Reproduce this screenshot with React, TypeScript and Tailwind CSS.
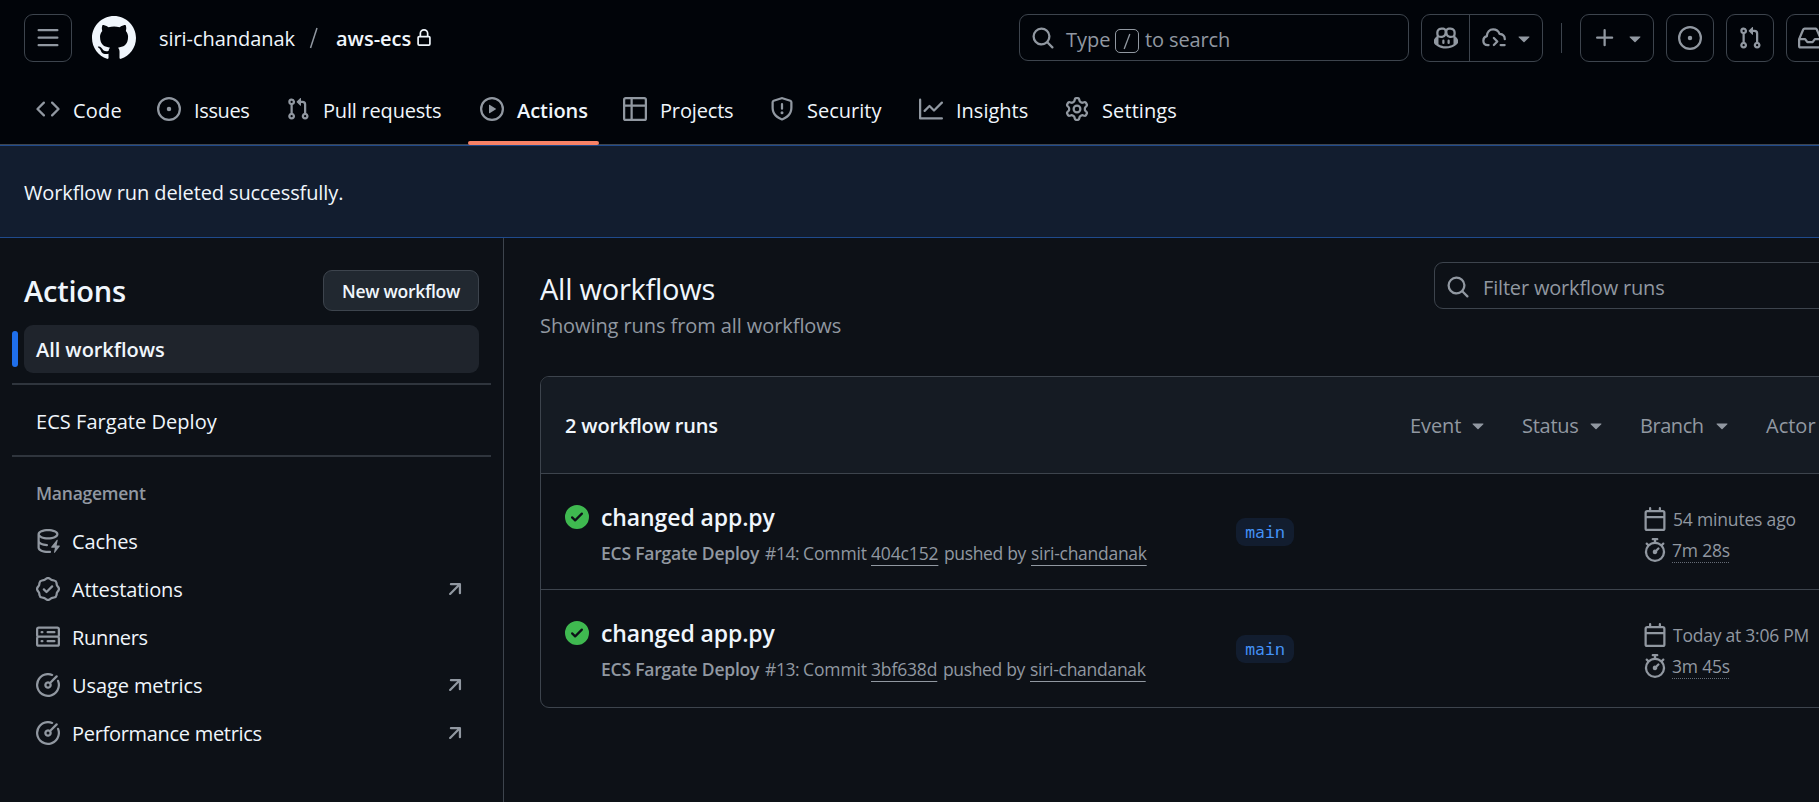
import type { ReactNode } from "react";

const P = {
  bars: "M1 2.75A.75.75 0 0 1 1.75 2h12.5a.75.75 0 0 1 0 1.5H1.75A.75.75 0 0 1 1 2.75Zm0 5A.75.75 0 0 1 1.75 7h12.5a.75.75 0 0 1 0 1.5H1.75A.75.75 0 0 1 1 7.75ZM1.75 12h12.5a.75.75 0 0 1 0 1.5H1.75a.75.75 0 0 1 0-1.5Z",
  code: "m11.28 3.22 4.25 4.25a.75.75 0 0 1 0 1.06l-4.25 4.25a.749.749 0 0 1-1.275-.326.749.749 0 0 1 .215-.734L13.94 8l-3.72-3.72a.749.749 0 0 1 .326-1.275.749.749 0 0 1 .734.215Zm-6.56 0a.751.751 0 0 1 1.042.018.751.751 0 0 1 .018 1.042L2.06 8l3.72 3.72a.749.749 0 0 1-.326 1.275.749.749 0 0 1-.734-.215L.47 8.53a.75.75 0 0 1 0-1.06Z",
  issue: "M8 9.5a1.5 1.5 0 1 0 0-3 1.5 1.5 0 0 0 0 3Z M8 0a8 8 0 1 1 0 16A8 8 0 0 1 8 0ZM1.5 8a6.5 6.5 0 1 0 13 0 6.5 6.5 0 0 0-13 0Z",
  pull: "M1.5 3.25a2.25 2.25 0 1 1 3 2.122v5.256a2.251 2.251 0 1 1-1.5 0V5.372A2.25 2.25 0 0 1 1.5 3.25Zm5.677-.177L9.573.677A.25.25 0 0 1 10 .854V2.5h1A2.5 2.5 0 0 1 13.5 5v5.628a2.251 2.251 0 1 1-1.5 0V5a1 1 0 0 0-1-1h-1v1.646a.25.25 0 0 1-.427.177L7.177 3.427a.25.25 0 0 1 0-.354ZM3.75 2.5a.75.75 0 1 0 0 1.5.75.75 0 0 0 0-1.5Zm0 9.5a.75.75 0 1 0 0 1.5.75.75 0 0 0 0-1.5Zm8.25.75a.75.75 0 1 0 1.5 0 .75.75 0 0 0-1.5 0Z",
  play: "M8 0a8 8 0 1 1 0 16A8 8 0 0 1 8 0ZM1.5 8a6.5 6.5 0 1 0 13 0 6.5 6.5 0 0 0-13 0Zm4.879-2.773 4.264 2.559a.25.25 0 0 1 0 .428l-4.264 2.559A.25.25 0 0 1 6 10.559V5.442a.25.25 0 0 1 .379-.215Z",
  table: "M0 1.75C0 .784.784 0 1.75 0h12.5C15.216 0 16 .784 16 1.75v12.5A1.75 1.75 0 0 1 14.25 16H1.75A1.75 1.75 0 0 1 0 14.25ZM6.5 6.5v8h7.75a.25.25 0 0 0 .25-.25V6.5Zm8-1.5V1.75a.25.25 0 0 0-.25-.25H6.5V5Zm-13 1.5v7.75c0 .138.112.25.25.25H5v-8ZM5 5V1.5H1.75a.25.25 0 0 0-.25.25V5Z",
  shield: "M7.467.133a1.748 1.748 0 0 1 1.066 0l5.25 1.68A1.75 1.75 0 0 1 15 3.48V7c0 1.566-.32 3.182-1.303 4.682-.983 1.498-2.585 2.813-5.032 3.855a1.697 1.697 0 0 1-1.33 0c-2.447-1.042-4.049-2.357-5.032-3.855C1.32 10.182 1 8.566 1 7V3.48a1.75 1.75 0 0 1 1.217-1.667Zm.61 1.429a.25.25 0 0 0-.153 0l-5.25 1.68a.25.25 0 0 0-.174.238V7c0 1.358.275 2.666 1.057 3.86.784 1.194 2.121 2.34 4.366 3.297a.196.196 0 0 0 .154 0c2.245-.956 3.582-2.104 4.366-3.298C13.225 9.666 13.5 8.36 13.5 7V3.48a.251.251 0 0 0-.174-.237l-5.25-1.68ZM8.75 4.75v3a.75.75 0 0 1-1.5 0v-3a.75.75 0 0 1 1.5 0ZM9 10.5a1 1 0 1 1-2 0 1 1 0 0 1 2 0Z",
  graph: "M1.5 1.75V13.5h13.75a.75.75 0 0 1 0 1.5H.75a.75.75 0 0 1-.75-.75V1.75a.75.75 0 0 1 1.5 0Zm14.28 2.53-5.25 5.25a.75.75 0 0 1-1.06 0L7 7.06 4.28 9.78a.751.751 0 0 1-1.042-.018.751.751 0 0 1-.018-1.042l3.25-3.25a.75.75 0 0 1 1.06 0L10 7.94l4.72-4.72a.751.751 0 0 1 1.042.018.751.751 0 0 1 .018 1.042Z",
  gear: "M8 0a8.2 8.2 0 0 1 .701.031C9.444.095 9.99.645 10.16 1.29l.288 1.107c.018.066.079.158.212.224.231.114.454.243.668.386.123.082.233.09.299.071l1.103-.303c.644-.176 1.392.021 1.82.63.27.385.506.792.704 1.218.315.675.111 1.422-.364 1.891l-.814.806c-.049.048-.098.147-.088.294.016.257.016.515 0 .772-.01.147.038.246.088.294l.814.806c.475.469.679 1.216.364 1.891a7.977 7.977 0 0 1-.704 1.217c-.428.61-1.176.807-1.82.63l-1.102-.302c-.067-.019-.177-.011-.3.071a5.909 5.909 0 0 1-.668.386c-.133.066-.194.158-.211.224l-.29 1.106c-.168.646-.715 1.196-1.458 1.26a8.006 8.006 0 0 1-1.402 0c-.743-.064-1.289-.614-1.458-1.26l-.289-1.106c-.018-.066-.079-.158-.212-.224a5.738 5.738 0 0 1-.668-.386c-.123-.082-.233-.09-.299-.071l-1.103.303c-.644.176-1.392-.021-1.82-.63a8.12 8.12 0 0 1-.704-1.218c-.315-.675-.111-1.422.363-1.891l.815-.806c.05-.048.098-.147.088-.294a6.214 6.214 0 0 1 0-.772c.01-.147-.038-.246-.088-.294l-.815-.806C.635 6.045.431 5.298.746 4.623a7.92 7.92 0 0 1 .704-1.217c.428-.61 1.176-.807 1.82-.63l1.102.302c.067.019.177.011.3-.071.214-.143.437-.272.668-.386.133-.066.194-.158.211-.224l.29-1.106C6.009.645 6.556.095 7.299.03 7.53.01 7.764 0 8 0Zm-.571 1.525c-.036.003-.108.036-.137.146l-.289 1.105c-.147.561-.549.967-.998 1.189-.173.086-.34.183-.5.29-.417.278-.97.423-1.529.27l-1.103-.303c-.109-.03-.175.016-.195.045-.22.312-.412.644-.573.99-.014.031-.021.11.059.19l.815.806c.411.406.562.957.53 1.456a4.709 4.709 0 0 0 0 .582c.032.499-.119 1.05-.53 1.456l-.815.806c-.081.08-.073.159-.059.19.162.346.353.677.573.989.02.03.085.076.195.046l1.102-.303c.56-.153 1.113-.008 1.53.27.161.107.328.204.501.29.447.222.85.629.997 1.189l.289 1.105c.029.109.101.143.137.146a6.6 6.6 0 0 0 1.142 0c.036-.003.108-.036.137-.146l.289-1.105c.147-.561.549-.967.998-1.189.173-.086.34-.183.5-.29.417-.278.97-.423 1.529-.27l1.103.303c.109.029.175-.016.195-.045.22-.313.411-.644.573-.99.014-.031.021-.11-.059-.19l-.815-.806c-.411-.406-.562-.957-.53-1.456a4.709 4.709 0 0 0 0-.582c-.032-.499.119-1.05.53-1.456l.815-.806c.081-.08.073-.159.059-.19a6.464 6.464 0 0 0-.573-.989c-.02-.03-.085-.076-.195-.046l-1.102.303c-.56.153-1.113.008-1.53-.27a4.44 4.44 0 0 0-.501-.29c-.447-.222-.85-.629-.997-1.189l-.289-1.105c-.029-.11-.101-.143-.137-.146a6.6 6.6 0 0 0-1.142 0ZM11 8a3 3 0 1 1-6 0 3 3 0 0 1 6 0ZM9.5 8a1.5 1.5 0 1 0-3.001.001A1.5 1.5 0 0 0 9.5 8Z",
  search: "M10.68 11.74a6 6 0 0 1-7.922-8.982 6 6 0 0 1 8.982 7.922l3.04 3.04a.749.749 0 0 1-.326 1.275.749.749 0 0 1-.734-.215ZM11.5 7a4.499 4.499 0 1 0-8.997 0A4.499 4.499 0 0 0 11.5 7Z",
  copilot: "M7.998 15.035c-4.562 0-7.873-2.914-7.998-3.749V9.338c.085-.628.677-1.686 1.588-2.065.013-.07.024-.143.036-.218.029-.183.06-.384.126-.612-.201-.508-.254-1.084-.254-1.656 0-.87.128-1.769.693-2.484.579-.733 1.494-1.124 2.724-1.261 1.206-.134 2.262.034 2.944.765.05.053.096.108.139.165.044-.057.094-.112.143-.165.682-.731 1.738-.899 2.944-.765 1.23.137 2.145.528 2.724 1.261.566.715.693 1.614.693 2.484 0 .572-.053 1.148-.254 1.656.066.228.098.429.126.612.012.076.024.148.037.218.924.385 1.522 1.471 1.591 2.095v1.872c0 .766-3.351 3.795-8.002 3.795Zm0-1.485c2.28 0 4.584-1.11 5.002-1.433V7.862l-.023-.116c-.49.21-1.075.291-1.727.291-1.146 0-2.059-.327-2.71-.991A3.222 3.222 0 0 1 8 6.303a3.24 3.24 0 0 1-.544.743c-.65.664-1.563.991-2.71.991-.652 0-1.236-.081-1.727-.291l-.023.116v4.255c.419.323 2.722 1.433 5.002 1.433ZM6.762 2.83c-.193-.206-.637-.413-1.682-.297-1.019.113-1.479.404-1.713.7-.247.312-.369.789-.369 1.554 0 .793.129 1.171.308 1.371.162.181.519.379 1.442.379.853 0 1.339-.235 1.638-.54.315-.322.527-.827.617-1.553.117-.935-.037-1.395-.241-1.614Zm4.155-.297c-1.044-.116-1.488.091-1.681.297-.204.219-.359.679-.242 1.614.091.726.303 1.231.618 1.553.299.305.784.54 1.638.54.922 0 1.28-.198 1.442-.379.179-.2.308-.578.308-1.371 0-.765-.123-1.242-.37-1.554-.233-.296-.693-.587-1.713-.7Z M6.25 9.037a.75.75 0 0 1 .75.75v1.501a.75.75 0 0 1-1.5 0V9.787a.75.75 0 0 1 .75-.75Zm4.25.75v1.501a.75.75 0 0 1-1.5 0V9.787a.75.75 0 0 1 1.5 0Z",
  caret: "m4.427 7.427 3.396 3.396a.25.25 0 0 0 .354 0l3.396-3.396A.25.25 0 0 0 11.396 7H4.604a.25.25 0 0 0-.177.427Z",
  plus: "M7.75 2a.75.75 0 0 1 .75.75V7h4.25a.75.75 0 0 1 0 1.5H8.5v4.25a.75.75 0 0 1-1.5 0V8.5H2.75a.75.75 0 0 1 0-1.5H7V2.75A.75.75 0 0 1 7.75 2Z",
  inbox: "M2.8 2.06A1.75 1.75 0 0 1 4.41 1h7.18c.7 0 1.333.417 1.61 1.06l2.74 6.395c.04.093.06.194.06.295v4.5A1.75 1.75 0 0 1 14.25 15H1.75A1.75 1.75 0 0 1 0 13.25v-4.5c0-.101.02-.202.06-.295Zm1.61.44a.25.25 0 0 0-.23.152L1.887 8H4.75a.75.75 0 0 1 .6.3L6.625 10h2.75l1.275-1.7a.75.75 0 0 1 .6-.3h2.863L11.82 2.652a.25.25 0 0 0-.23-.152Zm10.09 7h-2.875l-1.275 1.7a.75.75 0 0 1-.6.3h-3.5a.75.75 0 0 1-.6-.3L4.375 9.5H1.5v3.75c0 .138.112.25.25.25h12.5a.25.25 0 0 0 .25-.25Z",
  lock: "M4 4a4 4 0 0 1 8 0v2h.25c.966 0 1.75.784 1.75 1.75v5.5A1.75 1.75 0 0 1 12.25 15h-8.5A1.75 1.75 0 0 1 2 13.25v-5.5C2 6.784 2.784 6 3.75 6H4Zm8.25 3.5h-8.5a.25.25 0 0 0-.25.25v5.5c0 .138.112.25.25.25h8.5a.25.25 0 0 0 .25-.25v-5.5a.25.25 0 0 0-.25-.25ZM10.5 6V4a2.5 2.5 0 1 0-5 0v2Z",
  server: "M1.75 1h12.5c.966 0 1.75.784 1.75 1.75v4c0 .372-.116.717-.314 1 .198.283.314.628.314 1v4a1.75 1.75 0 0 1-1.75 1.75H1.75A1.75 1.75 0 0 1 0 12.75v-4c0-.358.109-.707.314-1a1.739 1.739 0 0 1-.314-1v-4C0 1.784.784 1 1.75 1ZM1.5 2.75v4c0 .138.112.25.25.25h12.5a.25.25 0 0 0 .25-.25v-4a.25.25 0 0 0-.25-.25H1.75a.25.25 0 0 0-.25.25Zm.25 5.75a.25.25 0 0 0-.25.25v4c0 .138.112.25.25.25h12.5a.25.25 0 0 0 .25-.25v-4a.25.25 0 0 0-.25-.25ZM7 4.75A.75.75 0 0 1 7.75 4h4.5a.75.75 0 0 1 0 1.5h-4.5A.75.75 0 0 1 7 4.75ZM7.75 10h4.5a.75.75 0 0 1 0 1.5h-4.5a.75.75 0 0 1 0-1.5ZM3 4.75A.75.75 0 0 1 3.75 4h.5a.75.75 0 0 1 0 1.5h-.5A.75.75 0 0 1 3 4.75ZM3.75 10h.5a.75.75 0 0 1 0 1.5h-.5a.75.75 0 0 1 0-1.5Z",
  meter: "M8 1.5a6.5 6.5 0 1 0 6.016 4.035.75.75 0 0 1 1.388-.57 8 8 0 1 1-4.37-4.37.75.75 0 0 1-.569 1.389A6.473 6.473 0 0 0 8 1.5Zm6.28.22a.75.75 0 0 1 0 1.06l-4.063 4.064a2.5 2.5 0 1 1-1.06-1.06L13.22 1.72a.75.75 0 0 1 1.06 0ZM7 8a1 1 0 1 0 2 0 1 1 0 0 0-2 0Z",
  verified: "m9.585.52.929.68c.153.112.331.186.518.215l1.138.175a2.678 2.678 0 0 1 2.24 2.24l.174 1.139c.029.187.103.365.215.518l.68.928a2.677 2.677 0 0 1 0 3.17l-.68.928a1.174 1.174 0 0 0-.215.518l-.175 1.138a2.678 2.678 0 0 1-2.241 2.241l-1.138.175a1.17 1.17 0 0 0-.518.215l-.928.68a2.677 2.677 0 0 1-3.17 0l-.928-.68a1.174 1.174 0 0 0-.518-.215L3.83 14.41a2.678 2.678 0 0 1-2.24-2.24l-.175-1.138a1.17 1.17 0 0 0-.215-.518l-.68-.928a2.677 2.677 0 0 1 0-3.17l.68-.928c.112-.153.186-.331.215-.518l.175-1.14a2.678 2.678 0 0 1 2.24-2.24l1.139-.175c.187-.029.365-.103.518-.215l.928-.68a2.677 2.677 0 0 1 3.17 0ZM7.303 1.728l-.927.68a2.67 2.67 0 0 1-1.18.489l-1.137.174a1.179 1.179 0 0 0-.987.987l-.174 1.136a2.677 2.677 0 0 1-.489 1.18l-.68.928a1.18 1.18 0 0 0 0 1.394l.68.927c.256.348.424.753.489 1.18l.174 1.137c.078.509.478.909.987.987l1.136.174a2.67 2.67 0 0 1 1.18.489l.928.68c.414.305.979.305 1.394 0l.927-.68a2.67 2.67 0 0 1 1.18-.489l1.137-.174a1.18 1.18 0 0 0 .987-.987l.174-1.136a2.67 2.67 0 0 1 .489-1.18l.68-.928a1.176 1.176 0 0 0 0-1.394l-.68-.927a2.686 2.686 0 0 1-.489-1.18l-.174-1.137a1.179 1.179 0 0 0-.987-.987l-1.136-.174a2.677 2.677 0 0 1-1.18-.489l-.928-.68a1.176 1.176 0 0 0-1.394 0ZM11.28 6.78l-3.75 3.75a.75.75 0 0 1-1.06 0L4.72 8.78a.751.751 0 0 1 .018-1.042.751.751 0 0 1 1.042-.018L7 8.94l3.22-3.22a.751.751 0 0 1 1.042.018.751.751 0 0 1 .018 1.042Z",
  arrow: "M4.53 4.75A.75.75 0 0 1 5.28 4h6.01a.75.75 0 0 1 .75.75v6.01a.75.75 0 0 1-1.5 0v-4.2l-5.26 5.261a.749.749 0 0 1-1.275-.326.749.749 0 0 1 .215-.734L9.48 5.5h-4.2a.75.75 0 0 1-.75-.75Z",
  check: "M8 16A8 8 0 1 1 8 0a8 8 0 0 1 0 16Zm3.78-9.72a.751.751 0 0 0-.018-1.042.751.751 0 0 0-1.042-.018L6.75 9.19 5.28 7.72a.751.751 0 0 0-1.042.018.751.751 0 0 0-.018 1.042l2 2a.75.75 0 0 0 1.06 0Z",
  calendar: "M4.75 0a.75.75 0 0 1 .75.75V2h5V.75a.75.75 0 0 1 1.5 0V2h1.25c.966 0 1.75.784 1.75 1.75v10.5A1.75 1.75 0 0 1 13.25 16H2.75A1.75 1.75 0 0 1 1 14.25V3.75C1 2.784 1.784 2 2.75 2H4V.75A.75.75 0 0 1 4.75 0ZM2.5 7.5v6.75c0 .138.112.25.25.25h10.5a.25.25 0 0 0 .25-.25V7.5Zm10.75-4H2.75a.25.25 0 0 0-.25.25V6h11V3.75a.25.25 0 0 0-.25-.25Z",
  stopwatch: "M5.75.75A.75.75 0 0 1 6.5 0h3a.75.75 0 0 1 0 1.5h-.75v1l-.001.041a6.724 6.724 0 0 1 3.464 1.435l.007-.006.75-.75a.749.749 0 0 1 1.275.326.749.749 0 0 1-.215.734l-.75.75-.006.007a6.75 6.75 0 1 1-10.548 0L2.72 5.03l-.75-.75a.751.751 0 0 1 .018-1.042.751.751 0 0 1 1.042-.018l.75.75.007.006A6.72 6.72 0 0 1 7.25 2.541V1.5H6.5a.75.75 0 0 1-.75-.75ZM8 14.5a5.25 5.25 0 1 0-.001-10.501A5.25 5.25 0 0 0 8 14.5Zm.389-6.7 1.33-1.33a.75.75 0 1 1 1.061 1.06L9.45 8.861A1.503 1.503 0 0 1 8 10.75a1.499 1.499 0 1 1 .389-2.95Z",
  cache: "M2.5 5.724V8c0 .248.238.7 1.169 1.159.874.43 2.144.745 3.62.822a.75.75 0 1 1-.078 1.498c-1.622-.085-3.102-.432-4.204-.975a5.565 5.565 0 0 1-.507-.28V12.5c0 .133.058.318.282.551.227.237.591.483 1.101.707 1.015.447 2.47.742 4.117.742.406 0 .802-.018 1.183-.052a.751.751 0 1 1 .134 1.494C8.89 15.98 8.45 16 8 16c-1.805 0-3.475-.32-4.721-.869-.623-.274-1.173-.619-1.579-1.041-.408-.425-.7-.964-.7-1.59v-9c0-.626.292-1.165.7-1.591.406-.42.956-.766 1.579-1.04C4.525.32 6.195 0 8 0c1.806 0 3.476.32 4.721.869.623.274 1.173.619 1.579 1.041.408.425.7.964.7 1.59 0 .626-.292 1.165-.7 1.591-.406.42-.956.766-1.578 1.04C11.475 6.68 9.805 7 8 7c-1.805 0-3.475-.32-4.721-.869a6.15 6.15 0 0 1-.779-.407Zm0-2.224c0 .133.058.318.282.551.227.237.591.483 1.101.707C4.898 5.205 6.353 5.5 8 5.5c1.646 0 3.101-.295 4.118-.742.508-.224.873-.471 1.1-.708.224-.232.282-.417.282-.55 0-.133-.058-.318-.282-.551-.227-.237-.591-.483-1.101-.707C11.102 1.795 9.647 1.5 8 1.5c-1.646 0-3.101.295-4.118.742-.508.224-.873.471-1.1.708-.224.232-.282.417-.282.55Z M14.49 7.582a.375.375 0 0 0-.66-.313l-3.625 4.625a.375.375 0 0 0 .295.606h2.127l-.619 2.922a.375.375 0 0 0 .666.304l3.125-4.125A.375.375 0 0 0 15.5 11h-1.778l.769-3.418Z",
  mark: "M12 1C5.9225 1 1 5.9225 1 12C1 16.8675 4.14875 20.9787 8.52125 22.4362C9.07125 22.5325 9.2775 22.2025 9.2775 21.9137C9.2775 21.6525 9.26375 20.7862 9.26375 19.865C6.5 20.3737 5.785 19.1912 5.565 18.5725C5.44125 18.2562 4.905 17.28 4.4375 17.0187C4.0525 16.8125 3.5025 16.3037 4.42375 16.29C5.29 16.2762 5.90875 17.0875 6.115 17.4175C7.105 19.0812 8.68625 18.6137 9.31875 18.325C9.415 17.61 9.70375 17.1287 10.02 16.8537C7.5725 16.5787 5.015 15.63 5.015 11.4225C5.015 10.2262 5.44125 9.23625 6.1425 8.46625C6.0325 8.19125 5.6475 7.06375 6.2525 5.55125C6.2525 5.55125 7.17375 5.2625 9.2775 6.67875C10.1575 6.43125 11.0925 6.3075 12.0275 6.3075C12.9625 6.3075 13.8975 6.43125 14.7775 6.67875C16.8813 5.24875 17.8025 5.55125 17.8025 5.55125C18.4075 7.06375 18.0225 8.19125 17.9125 8.46625C18.6138 9.23625 19.04 10.2125 19.04 11.4225C19.04 15.6437 16.4688 16.5787 14.0213 16.8537C14.42 17.1975 14.7638 17.8575 14.7638 18.8887C14.7638 20.36 14.75 21.5425 14.75 21.9137C14.75 22.2025 14.9563 22.5462 15.5063 22.4362C19.8513 20.9787 23 16.8537 23 12C23 5.9225 18.0775 1 12 1Z",
};

function Icon({ d, className = "size-6 text-[#9198a1]" }: { d: string; className?: string }) {
  return (
    <svg viewBox="0 0 16 16" fill="currentColor" className={`shrink-0 ${className}`}>
      <path d={d} />
    </svg>
  );
}

function CloudIcon() {
  return (
    <svg viewBox="0 0 16 16" fill="none" stroke="currentColor" strokeWidth="1.5" strokeLinecap="round" strokeLinejoin="round" className="size-6 shrink-0 text-[#9198a1]">
      <path d="M4.4 12.7H3.9C2.1 12.7.9 11.5.9 9.8c0-1.6.9-2.6 2.3-3C3.4 4.2 5 2.3 7.4 2.3c2 0 3.6 1.1 4.3 3 2.1.2 3.5 1.5 3.5 3.5" />
      <path d="m7.9 8 2.3 2.3-2.3 2.4M12.4 12.7h2.7" />
    </svg>
  );
}

function IconButton({ className, children }: { className: string; children: ReactNode }) {
  return (
    <button className={`flex h-12 shrink-0 items-center rounded-[9px] border border-[#3d444d] ${className}`}>{children}</button>
  );
}

const tabs = [
  { label: "Code", icon: P.code, text: "w-[48px] tracking-[0.2px]" },
  { label: "Issues", icon: P.issue, text: "w-[56px] tracking-[-0.37px]" },
  { label: "Pull requests", icon: P.pull, text: "w-[121px] tracking-[-0.2px]" },
  { label: "Actions", icon: P.play, text: "w-[70px] font-semibold tracking-[-0.05px]", active: true },
  { label: "Projects", icon: P.table, text: "w-[74px] tracking-[-0.16px]" },
  { label: "Security", icon: P.shield, text: "w-[76px]" },
  { label: "Insights", icon: P.graph, text: "w-[73px]" },
  { label: "Settings", icon: P.gear, text: "w-[76px] tracking-[0.1px]" },
];

function Header() {
  return (
    <header className="flex h-[145px] flex-col border-b border-[#3d444d] bg-[#010409] pt-[14px]">
      <div className="flex h-12 items-center pl-6">
        <IconButton className="w-12 justify-center">
          <Icon d={P.bars} />
        </IconButton>
        <svg viewBox="0 0 24 24" className="ml-[18px] size-12 shrink-0" fill="#f0f6fc">
          <path d={P.mark} />
        </svg>
        <span className="ml-[21px] w-[138px] shrink-0 pt-[2px] tracking-[-0.05px]">siri-chandanak</span>
        <span className="ml-3 w-[27px] shrink-0">
          <svg viewBox="0 0 10 22" className="h-[22px] w-[10px]" fill="none" stroke="#9198a1" strokeWidth="1.5">
            <path d="M1.5 21 8 1" />
          </svg>
        </span>
        <span className="w-[79px] shrink-0 pt-[2px] font-semibold">aws-ecs</span>
        <Icon d={P.lock} className="size-[18px] text-[#f0f6fc]" />

        <div className="mb-px ml-[586px] flex h-[47px] w-[390px] shrink-0 items-center rounded-[9px] border border-[#3d444d] pl-[11px] text-[#9198a1]">
          <Icon d={P.search} />
          <span className="ml-[11px] w-[49px] pt-[4px]">Type</span>
          <kbd className="mt-[7px] flex size-6 items-center justify-center rounded-[5px] border border-[#9198a1]">
            <svg viewBox="0 0 8 18" className="h-[17px] w-2" fill="none" stroke="currentColor" strokeWidth="1.4">
              <path d="M1 17 7 1" />
            </svg>
          </kbd>
          <span className="ml-[6px] pt-[4px] tracking-[-0.12px]">to search</span>
        </div>

        <IconButton className="ml-3 w-[122px]">
          <span className="flex h-full w-12 items-center justify-center border-r border-[#3d444d]">
            <Icon d={P.copilot} />
          </span>
          <span className="ml-3 flex items-center gap-[6px]">
            <CloudIcon />
            <Icon d={P.caret} />
          </span>
        </IconButton>
        <span className="ml-[18px] h-[30px] w-px shrink-0 bg-[#3d444d]" />
        <IconButton className="ml-[18px] w-[74px] gap-[6px] pl-3">
          <Icon d={P.plus} />
          <Icon d={P.caret} />
        </IconButton>
        <IconButton className="ml-3 w-12 justify-center">
          <Icon d={P.issue} />
        </IconButton>
        <IconButton className="ml-3 w-12 justify-center">
          <Icon d={P.pull} />
        </IconButton>
        <IconButton className="ml-3 w-12 justify-center">
          <Icon d={P.inbox} />
        </IconButton>
      </div>
      <nav className="mt-3 flex h-[70px] gap-3 pl-6">
        {tabs.map((t) => (
          <a key={t.label} className="relative flex items-center gap-[13px] px-3">
            <Icon d={t.icon} />
            <span className={`pt-[4px] ${t.text}`}>{t.label}</span>
            {t.active && <span className="absolute inset-x-0 -bottom-px h-[4px] rounded-sm bg-[#f78166]" />}
          </a>
        ))}
      </nav>
    </header>
  );
}

const management = [
  { label: "Caches", icon: P.cache, external: false, text: "tracking-[-0.1px]" },
  { label: "Attestations", icon: P.verified, external: true, text: "tracking-[-0.1px]" },
  { label: "Runners", icon: P.server, external: false, text: "tracking-[-0.33px]" },
  { label: "Usage metrics", icon: P.meter, external: true, text: "tracking-[-0.1px]" },
  { label: "Performance metrics", icon: P.meter, external: true, text: "tracking-[-0.3px]" },
];

function Sidebar() {
  return (
    <aside className="w-[504px] shrink-0 border-r border-[#3d444d] px-3 pt-8">
      <div className="flex h-[41px] items-center justify-between px-3">
        <h2 className="text-[29px] leading-10 font-semibold tracking-[-0.2px]">Actions</h2>
        <button className="flex h-[41px] w-[156px] items-center justify-center rounded-[9px] border border-[#3d444d] bg-[#212830] text-[17.5px] font-semibold tracking-[-0.28px]">
          New workflow
        </button>
      </div>
      <div className="mt-[14px] flex h-12 items-center">
        <span className="h-9 w-[6px] rounded-full bg-[#1f6feb]" />
        <span className="mr-3 ml-[6px] flex h-12 flex-1 items-center rounded-[9px] bg-[#1f242c] pt-px pl-3 font-semibold tracking-[-0.05px]">All workflows</span>
      </div>
      <hr className="mt-[10px] h-[2px] border-0 bg-[#2f353d]" />
      <a className="flex h-[70px] items-center pl-6 tracking-[0.04px]">
        <span className="pt-[3px]">ECS Fargate Deploy</span>
      </a>
      <hr className="h-[2px] border-0 bg-[#2f353d]" />
      <h3 className="mt-[24px] h-9 pl-6 text-[17.5px] leading-[25px] font-semibold tracking-[-0.25px] text-[#9198a1]">Management</h3>
      <ul>
        {management.map((m) => (
          <li key={m.label} className="flex h-12 items-center pr-6 pl-6">
            <Icon d={m.icon} />
            <span className={`ml-3 flex-1 pt-px ${m.text}`}>{m.label}</span>
            {m.external && <Icon d={P.arrow} />}
          </li>
        ))}
      </ul>
    </aside>
  );
}

const filters = [
  { label: "Event", text: "w-[56px] tracking-[-0.1px]", box: "w-[112px]" },
  { label: "Status", text: "w-[62px] tracking-[-0.27px]", box: "w-[118px]" },
  { label: "Branch", text: "w-[70px] tracking-[-0.45px]", box: "w-[126px]" },
  { label: "Actor", text: "w-[56px]", box: "w-[112px]" },
];

const runs = [
  { id: "#14:", sha: "404c152", shaBox: "w-[73px]", ago: "54 minutes ago", agoText: "tracking-[-0.18px]", took: "7m 28s", row: "h-[116px] border-b border-[#3d444d]", tag: "mt-[44px]" },
  { id: "#13:", sha: "3bf638d", shaBox: "w-[72px]", ago: "Today at 3:06 PM", agoText: "tracking-[-0.24px]", took: "3m 45s", row: "h-[117px]", tag: "mt-[45px]" },
];

const link = "underline decoration-1 underline-offset-[5px] [text-decoration-skip-ink:none]";

function Run({ run }: { run: (typeof runs)[number] }) {
  return (
    <li className={`flex items-start pl-6 ${run.row}`}>
      <Icon d={P.check} className="mt-[31px] size-6 text-[#3fb950]" />
      <div className="ml-3 w-[635px] shrink-0 pt-7">
        <div className="text-[23px] leading-[30px] font-semibold tracking-[-0.1px]">changed app.py</div>
        <div className="mt-[7px] flex text-[17.5px] leading-7 text-[#9198a1]">
          <span className="w-[164px] font-semibold tracking-[-0.22px]">ECS Fargate Deploy</span>
          <span className="w-[38px] tracking-[-0.4px]">{run.id}</span>
          <span className="w-[68px] tracking-[-0.1px]">Commit</span>
          <span className={`tracking-[-0.15px] ${run.shaBox}`}>
            <span className={link}>{run.sha}</span>
          </span>
          <span className="w-[87px] tracking-[-0.35px]">pushed by</span>
          <span className={`tracking-[-0.28px] ${link}`}>siri-chandanak</span>
        </div>
      </div>
      <div className="w-[407px] shrink-0">
        <span className={`flex h-7 w-[58px] items-center justify-center rounded-[9px] bg-[#121d2f] font-['Noto_Sans_Mono','DejaVu_Sans_Mono',monospace] text-[16.5px] text-[#4493f8] ${run.tag}`}>
          main
        </span>
      </div>
      <div className="flex shrink-0 flex-col gap-[7px] pt-[33px] text-[17.5px] leading-6 text-[#9198a1]">
        <div className="flex h-6 items-center gap-[6px]">
          <Icon d={P.calendar} />
          <span className={`pb-px ${run.agoText}`}>{run.ago}</span>
        </div>
        <div className="flex h-6 items-center gap-[5px]">
          <Icon d={P.stopwatch} />
          <span className="tracking-[-0.2px] underline decoration-[#656c76] decoration-dotted decoration-1 underline-offset-[5px]">{run.took}</span>
        </div>
      </div>
    </li>
  );
}

function Main() {
  return (
    <main className="min-w-0 flex-1 overflow-hidden pl-9">
      <div className="flex">
        <div className="w-[894px] shrink-0">
          <h1 className="mt-[31px] text-[29px] leading-10 tracking-[-0.25px]">All workflows</h1>
          <p className="mt-[2px] leading-[30px] tracking-[-0.08px] text-[#9198a1]">Showing runs from all workflows</p>
        </div>
        <div className="mt-6 flex h-[47px] w-[480px] shrink-0 items-center rounded-[9px] border border-[#3d444d] pl-[11px] text-[#9198a1]">
          <Icon d={P.search} className="mt-[3px] size-6" />
          <span className="ml-[13px] pt-[4px] tracking-[-0.18px]">Filter workflow runs</span>
        </div>
      </div>
      <section className="mt-[35px] w-[1400px] rounded-[9px] border border-[#3d444d]">
        <div className="flex h-[97px] items-center rounded-t-[8px] border-b border-[#3d444d] bg-[#151b23] pl-6">
          <h2 className="w-[845px] pt-px font-semibold tracking-[-0.18px]">2 workflow runs</h2>
          {filters.map((f) => (
            <span key={f.label} className={`flex shrink-0 items-center text-[#9198a1] ${f.box}`}>
              <span className={`pt-px ${f.text}`}>{f.label}</span>
              <Icon d={P.caret} />
            </span>
          ))}
        </div>
        <ul>
          {runs.map((r) => (
            <Run key={r.id} run={r} />
          ))}
        </ul>
      </section>
    </main>
  );
}

export default function App() {
  return (
    <div className="flex h-[802px] w-full flex-col overflow-hidden bg-[#0d1117] font-['Open_Sans','Noto_Sans',sans-serif] text-[20px] leading-[30px] whitespace-nowrap text-[#f0f6fc]">
      <Header />
      <div className="flex h-[93px] shrink-0 items-center border-y border-[#1f4a8c] bg-[#121d2f] pl-6 tracking-[-0.1px]">
        <span className="pt-[3px]">Workflow run deleted successfully.</span>
      </div>
      <div className="flex min-h-0 flex-1">
        <Sidebar />
        <Main />
      </div>
    </div>
  );
}
